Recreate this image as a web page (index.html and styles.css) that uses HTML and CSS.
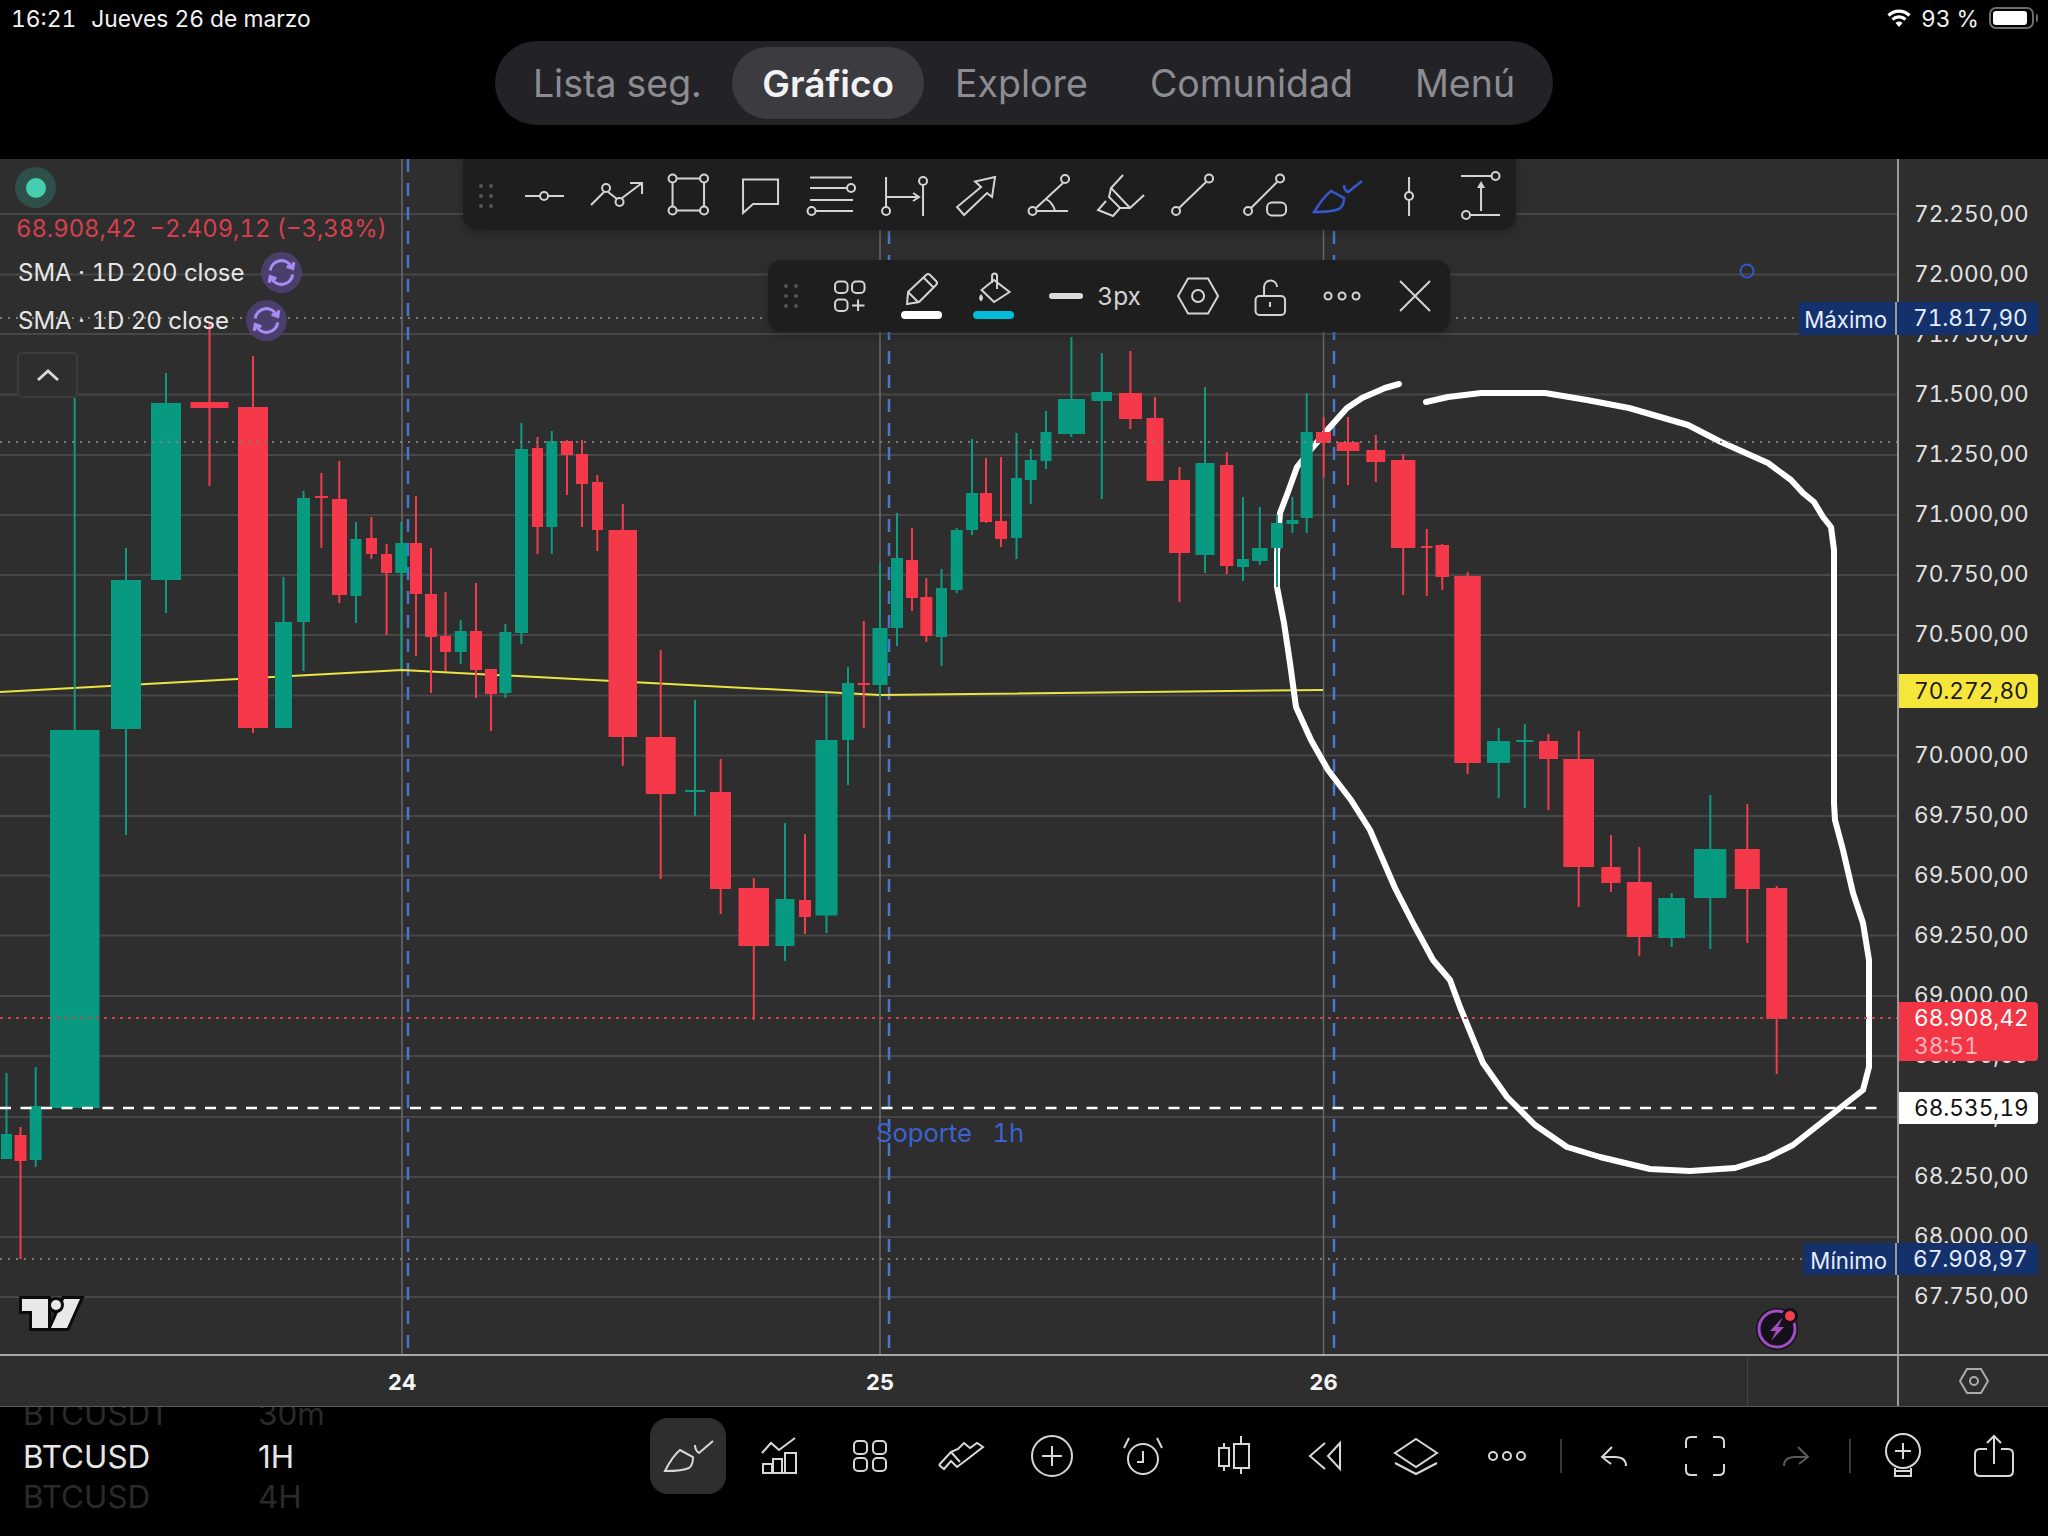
FILE: index.html
```html
<!DOCTYPE html>
<html lang="es">
<head>
<meta charset="utf-8">
<title>BTCUSD</title>
<link rel="stylesheet" href="styles.css">
</head>
<body>
<div class="page">
  <header class="status">
    <div class="status-left"><span>16:21</span><span>Jueves 26 de marzo</span></div>
    <div class="status-right">
      <svg class="wifi" viewBox="0 0 24 18"><path class="wifi-arc" d="M1.5 6.5A15 15 0 0 1 22.5 6.5M5.5 10.5A9.5 9.5 0 0 1 18.5 10.5"/><path class="wifi-dot" d="M12 18L8.5 14A5 5 0 0 1 15.5 14Z"/></svg>
      <span>93 %</span>
      <div class="battery"><div class="battery-fill"></div></div><div class="battery-nub"></div>
    </div>
  </header>

  <nav class="tabs-row">
    <div class="tabs">
      <div class="tab">Lista seg.</div>
      <div class="tab active">Gráfico</div>
      <div class="tab">Explore</div>
      <div class="tab">Comunidad</div>
      <div class="tab">Menú</div>
    </div>
  </nav>

  <section class="chart-main">
    <div class="plot">
      <svg class="canvas" viewBox="0 159 1897 1195" preserveAspectRatio="none">
        <path class="grid" d="M0 214H1897M0 274.500H1897M0 334H1897M0 394.500H1897M0 455H1897M0 515H1897M0 575H1897M0 635H1897M0 695.500H1897M0 755.500H1897M0 816H1897M0 875.500H1897M0 935.500H1897M0 996H1897M0 1056H1897M0 1117H1897M0 1177H1897M0 1237H1897M0 1297H1897"/>
        <path class="vgrid" d="M402 159V1354M880 159V1354M1323.500 159V1354"/>
        <path class="vdash" d="M408 159V1354M889 159V1354M1334 159V1354"/>
        <polyline class="sma" points="0,692 402,670 880,695 1323,690"/>
        <polyline class="draw" points="1426,402 1448,397 1481,393 1545,393 1587,400 1629,408 1688,425 1721,442 1768,463 1791,480 1803,493 1814,502 1823,517 1831,527 1834,550 1834,803 1835,820 1843,850 1853,893 1863,923 1869,960 1869,1067 1863,1090 1840,1108 1793,1145 1767,1158 1735,1168 1690,1171 1650,1169 1600,1157 1567,1147 1535,1125 1507,1097 1483,1063 1460,1007 1450,980 1433,960 1414,925 1395,888 1370,830 1351,800 1328,770 1311,740 1296,707 1290,663 1284,623 1277,587 1277,553 1280,513 1288,492 1297,467 1313,447 1330,427 1347,408 1362,398 1385,388 1399,384"/>
        <path class="wick up" d="M6.500 1073V1159M35.700 1067V1167M74.700 398V730M126 548V835M166 373V613M283.500 577V622M303.500 491V671M356 522V623M401.300 522V669M460.700 620V664M505.400 624V698M521.400 423V644M551.800 431V554M695 700V816M785 823V961M826.500 693V933M848 667V785M880 562V697M897 513V646M941.500 569V666M956.700 528V593M972 439V535M1016.500 433V559M1030.800 449V504M1046 411V469M1071.400 337V437M1101.800 353V499M1205 387V573M1243 497V581M1259.800 507V565M1277 515V587M1292.400 497V533M1306.700 393V533M1498.700 728V798M1524.800 724V808M1671.700 893V947M1710.300 795V949"/>
        <path class="body up" d="M1 1134h11V1159H1zM29.700 1106h12V1160h-12zM50 730h49.500V1108H50zM111 580h30V729h-30zM151 403h30V580h-30zM275 622h17V728h-17zM297 498h13V622h-13zM350.500 539h11V596h-11zM395.300 543h12V573h-12zM454.700 631h12V652h-12zM499.400 632h12V693h-12zM515 449h13V633h-13zM546.300 441h11V527h-11zM685 790h20v2h-20zM775.500 899h19V946h-19zM815.500 740h22V915.500h-22zM842 683h12V740h-12zM872.500 628h15V685h-15zM891 558h12V628h-12zM936 588h11V637h-11zM950.700 530h12V590h-12zM966 493h12V530h-12zM1011 478h11V538h-11zM1024.800 460h12V480h-12zM1040.500 432h11V461h-11zM1058 399h27V434h-27zM1091.500 392h20.500V401h-20.500zM1195.500 463h19V555h-19zM1237 559h12V567h-12zM1252 548h15.600V561h-15.600zM1271 523h12V548h-12zM1286.400 520h12V524h-12zM1300.700 432h12V518h-12zM1487 741h23V763h-23zM1516.300 740h17v2h-17zM1658.300 898h26.700V938h-26.700zM1694 849h32.300V898h-32.300z"/>
        <path class="wick down" d="M20.500 1127V1259M209.500 323V486M253 356V733M321.400 473V548M339.300 461V603M371.400 517V559M386.600 544V635M416 496V656M431 548V693M445.500 592V671M476 583V698M491 669V731M537.500 437V554M567 440V495M582 440V527M597.300 475V551M622.800 504V766M660.700 650V879M720.700 759V914M753.800 878V1020M805 834V934M863.800 621V728M912 528V611M926.300 578V642M986 458V523M1001 457V547M1130.400 351V429M1155 397V481M1179.500 467V602M1226.800 452V574M1323.700 417V477M1348 417V485M1375.800 435V482M1403.200 454V595M1426.800 529V596M1442.300 544V590M1467.600 572V774M1548.400 734V810M1578.700 731V907M1611 835V892M1639.300 847V956M1747.300 804V943M1776.700 886V1074"/>
        <path class="body down" d="M14.500 1135h12V1161h-12zM190.500 402h38V408h-38zM238 407h30V728h-30zM315 496h13v2h-13zM332 499h15V595h-15zM366 538h11V554h-11zM381 554h11V573h-11zM410 543h12V594h-12zM425 594h12V637h-12zM440 636h11V652h-11zM470 631h12V670h-12zM485 669h12V694h-12zM532 448h11V527h-11zM561 441h12V455h-12zM576 454h12V484h-12zM592 482h11V530h-11zM608.500 530h28.500V737h-28.500zM645.700 737h30V794h-30zM710 792h21V889h-21zM738.500 888h30.500V946h-30.500zM799 900h12V917h-12zM857.800 683h12v2h-12zM906 560h12V598h-12zM920.300 597h12V636h-12zM980 493h12V522h-12zM995 521h12V539h-12zM1119 393h23V419h-23zM1146.500 418h17V481h-17zM1169 480h21V553h-21zM1220 465h13.400V566h-13.400zM1316 432h15V443h-15zM1336.700 442h22.700V451h-22.700zM1366.300 450h19V462h-19zM1391 460h24.400V548h-24.400zM1421 546h11.400v2h-11.400zM1435.500 545h13.500V577h-13.500zM1454.300 576h26.500V763h-26.500zM1539 741h19V759h-19zM1563.300 759h30.700V867h-30.700zM1601.300 867h19.300V883h-19.300zM1626.800 882h25V937h-25zM1734.800 849h25V889h-25zM1766.200 888h21V1019h-21z"/>
        <path class="dots grey" d="M0 318H1799M0 442H1897M0 1259H1803"/>
        <path class="dots red" d="M0 1018H1897"/>
        <path class="dash-white" d="M0 1108H1885"/>
        <circle class="anchor" cx="1747" cy="271" r="6.500"/>
        <g class="tv-logo">
          <path d="M22 1299H48V1328H32V1311H22Z"/><path d="M64 1299H80L67 1328H51Z"/><circle cx="56" cy="1305" r="5"/>
        </g>
      </svg>

      <div class="legend">
        <div class="legend-status"><div class="status-ring"><div class="status-core"></div></div></div>
        <div class="legend-price">68.908,42&nbsp;&nbsp;−2.409,12 (−3,38%)</div>
        <div class="legend-row"><span>SMA · 1D 200 close</span>
          <div class="sync"><svg viewBox="-20 -20 40 40"><path d="M-11 -2A11 11 0 0 1 10 -5M11 2A11 11 0 0 1 -10 5M5 -6L11 -4L12 -10M-5 6L-11 4L-12 10"/></svg></div>
        </div>
        <div class="legend-row"><span>SMA · 1D 20 close</span>
          <div class="sync"><svg viewBox="-20 -20 40 40"><path d="M-11 -2A11 11 0 0 1 10 -5M11 2A11 11 0 0 1 -10 5M5 -6L11 -4L12 -10M-5 6L-11 4L-12 10"/></svg></div>
        </div>
        <div class="collapse"><svg viewBox="0 0 24 14"><path d="M2 12L12 3L22 12"/></svg></div>
      </div>

      <div class="soporte">Soporte&nbsp;&nbsp;&nbsp;1h</div>

      <div class="badge">
        <svg viewBox="-23 -23 46 46"><circle class="badge-bg" r="21"/><circle class="badge-ring" r="18"/><path class="badge-bolt" d="M6 -12L-7 2H-1L-6 12L7 -2H1Z"/><circle class="badge-dotbg" cx="13" cy="-13" r="8"/><circle class="badge-dot" cx="13" cy="-13" r="5"/></svg>
      </div>

      <div class="toolbar toolbar-tools">
        <div class="grip"><i></i><i></i><i></i><i></i><i></i><i></i></div>
        <svg class="ico" viewBox="-36 -28 72 56"><path d="M-19 0H-4M4 0H20"/><circle r="4"/></svg>
        <svg class="ico" viewBox="-36 -28 72 56"><path d="M-25 9L-12 -4M-8 -4L1 3M6 2L26 -13M14 -13H26V-2"/><circle cx="-10" cy="-8" r="4"/><circle cx="3.500" cy="6" r="4"/></svg>
        <svg class="ico" viewBox="-36 -28 72 56"><path d="M-11 -17.500H12M-11 14.500H12M-15.500 -13.500V10.500M16 -13.500V10.500"/><circle cx="-15.500" cy="-17.500" r="4"/><circle cx="16" cy="-17.500" r="4"/><circle cx="-15.500" cy="14.500" r="4"/><circle cx="16" cy="14.500" r="4"/></svg>
        <svg class="ico" viewBox="-36 -28 72 56"><path d="M-17 -16.500H18V8H-7L-17 17Z"/></svg>
        <svg class="ico" viewBox="-36 -28 72 56"><path d="M-22 -18.500H20M-22 -8H15M-22 4H21M-16 15H21"/><circle cx="19" cy="-8" r="4"/><circle cx="-20.500" cy="15" r="4"/></svg>
        <svg class="ico" viewBox="-36 -28 72 56"><path d="M-18 -19V11M19 -11V20M-18 1H14M9 -3L15 1L9 5"/><circle cx="-18" cy="15" r="4"/><circle cx="19" cy="-15" r="4"/></svg>
        <svg class="ico" viewBox="-36 -28 72 56"><path d="M18 -19L-2 -14.500L4 -9L-20 11L-13 19L10 -3L15 1Z"/></svg>
        <svg class="ico" viewBox="-36 -28 72 56"><path d="M-13 12L14 -13M-12 15H19M-3 3Q4 7 6 15"/><circle cx="-16.500" cy="15" r="4"/><circle cx="16" cy="-17" r="4"/></svg>
        <svg class="ico" viewBox="-36 -28 72 56"><path d="M2 -21L-10 -8L9 12M-10 -8L-12 1L-1 12H9L23 -1M-15 5L-23 14L-8 20L-1 12"/></svg>
        <svg class="ico" viewBox="-36 -28 72 56"><path d="M-14 12L13 -14"/><circle cx="-17" cy="15" r="4"/><circle cx="16" cy="-17.500" r="4"/></svg>
        <svg class="ico" viewBox="-36 -28 72 56"><path d="M-14 12L12 -14"/><circle cx="-17" cy="15" r="4"/><circle cx="15" cy="-17.500" r="4"/><rect x="2" y="6.500" width="19" height="13" rx="5"/></svg>
        <svg class="ico ico-blue" viewBox="-36 -28 72 56"><path d="M-23 16C-18 8 -13 0 -6 -5L7 2C7 8 5 11 2 13C-5 16 -15 16 -23 16ZM7 -11C7 -8 8 -5 11 -4L25 -15"/></svg>
        <svg class="ico" viewBox="-36 -28 72 56"><path d="M0 -19V-4M0 4V20"/><circle r="4"/></svg>
        <svg class="ico" viewBox="-36 -28 72 56"><path d="M-20 -20H10M-11 19H19M0 15V-12"/><path class="solid" d="M0 -15L-4 -8H4Z"/><circle cx="14.500" cy="-20" r="4"/><circle cx="-15" cy="19" r="4"/></svg>
      </div>

      <div class="toolbar toolbar-style">
        <div class="grip"><i></i><i></i><i></i><i></i><i></i><i></i></div>
        <svg class="ico" viewBox="-36 -28 72 56"><rect x="-14" y="-14.500" width="12.500" height="11.500" rx="4"/><rect x="3" y="-14.500" width="12.500" height="11.500" rx="4"/><rect x="-14" y="3.500" width="12.500" height="11.500" rx="4"/><path d="M9 3.500V15M3 9.500H15.500"/></svg>
        <svg class="ico" viewBox="-36 -28 72 56"><path d="M-14 8L-13 -4L5 -21Q7 -23 9 -21L15 -15Q17 -13 15 -11L-2 6ZM-13 -4L-3 6M2 -19L12 -9"/><rect class="swatch white" x="-20" y="15" width="41" height="8" rx="4"/></svg>
        <svg class="ico" viewBox="-36 -28 72 56"><path d="M1 -16L16.500 -4L1 6L-11.500 -6ZM-1 -13V-20A2.500 2.500 0 0 1 4 -20V-7"/><path class="solid" d="M-12 -2Q-8 2 -12 5.500Q-16 2 -12 -2Z"/><rect class="swatch cyan" x="-20" y="15" width="41" height="8" rx="4"/></svg>
        <div class="thickness"><div class="thickness-bar"></div><span>3px</span></div>
        <svg class="ico" viewBox="-36 -28 72 56"><path d="M-20 0L-10 -17.500H10L20 0L10 17.500H-10Z"/><circle r="6"/></svg>
        <svg class="ico" viewBox="-36 -28 72 56"><rect x="-14.500" y="0" width="29.500" height="19" rx="4"/><path d="M-6 0V-9A6.500 6.500 0 0 1 7 -9M0 6V11"/></svg>
        <svg class="ico" viewBox="-36 -28 72 56"><circle cx="-14" r="3.500"/><circle r="3.500"/><circle cx="14" r="3.500"/></svg>
        <svg class="ico" viewBox="-36 -28 72 56"><path d="M-15 -15L15 15M15 -15L-15 15"/></svg>
      </div>
    </div>

    <div class="axis">
      <div>72.250,00</div><div>72.000,00</div><div>71.750,00</div><div>71.500,00</div><div>71.250,00</div><div>71.000,00</div><div>70.750,00</div><div>70.500,00</div><div>70.250,00</div><div>70.000,00</div><div>69.750,00</div><div>69.500,00</div><div>69.250,00</div><div>69.000,00</div><div>68.750,00</div><div>68.500,00</div><div>68.250,00</div><div>68.000,00</div><div>67.750,00</div>
    </div>

    <div class="tag tag-max"><span class="tag-name">Máximo</span><span class="tag-value">71.817,90</span></div>
    <div class="tag tag-min"><span class="tag-name">Mínimo</span><span class="tag-value">67.908,97</span></div>
    <div class="tag tag-sma"><span class="tag-value">70.272,80</span></div>
    <div class="tag tag-last"><span class="tag-value">68.908,42</span><span class="tag-count">38:51</span></div>
    <div class="tag tag-line"><span class="tag-value">68.535,19</span></div>
  </section>

  <section class="time-row">
    <div class="time-scale"><span class="d24">24</span><span class="d25">25</span><span class="d26">26</span><i class="now-line"></i></div>
    <div class="time-corner"><svg viewBox="-16 -14 32 28"><path d="M-14 0L-7 -12H7L14 0L7 12H-7Z"/><circle r="4"/></svg></div>
  </section>

  <footer class="bottom">
    <div class="picker">
      <div class="pick faded"><span>BTCUSDT</span><span>30m</span></div>
      <div class="pick"><span>BTCUSD</span><span>1H</span></div>
      <div class="pick faded"><span>BTCUSD</span><span>4H</span></div>
    </div>
    <div class="tool active"><svg viewBox="-36 -30 72 60"><path d="M-23 15C-19 7 -14 -1 -8 -6L5 1C5 7 4 10 1 12C-5 15 -15 15 -23 15ZM7 -11C7 -8 8 -5 11 -3L25 -15"/></svg></div>
    <div class="tool"><svg viewBox="-36 -30 72 60"><path d="M-17 -3L-8 -13L0 -6L16 -18M-17 17H18M-16 17V8H-7V17M-6 17V3H3V17M6 17V-3H17V17"/></svg></div>
    <div class="tool"><svg viewBox="-36 -30 72 60"><rect x="-16" y="-15" width="13" height="13" rx="4"/><rect x="3" y="-15" width="13" height="13" rx="4"/><rect x="-16" y="2" width="13" height="13" rx="4"/><rect x="3" y="2" width="13" height="13" rx="4"/></svg></div>
    <div class="tool"><svg viewBox="-36 -30 72 60"><path d="M-22 9L-10 -4L-1 6M-22 9L-17 13L-10 5L-4 11L4 5L22 -9L16 -13L9 -8L3 -13L-3 -7L-10 -4"/></svg></div>
    <div class="tool"><svg viewBox="-36 -30 72 60"><circle r="20"/><path d="M-10 0H10M0 -10V10"/></svg></div>
    <div class="tool"><svg viewBox="-36 -30 72 60"><circle cy="3" r="15"/><path d="M0 -5V6H-6M-19 -8L-14 -18M19 -8L14 -18"/></svg></div>
    <div class="tool"><svg viewBox="-36 -30 72 60"><rect x="-15" y="-8" width="10" height="18"/><rect x="0" y="-12" width="15" height="24"/><path d="M-10 -13V-8M-10 10V15M7 -20V-12M7 12V18"/></svg></div>
    <div class="tool"><svg viewBox="-36 -30 72 60"><path d="M0 -13L-15 0L0 13M15 -13L3 0L15 13Z"/></svg></div>
    <div class="tool"><svg viewBox="-36 -30 72 60"><path d="M0 -17L21 -3L0 11L-21 -3ZM-21 7L0 18L21 7"/></svg></div>
    <div class="tool"><svg viewBox="-36 -30 72 60"><circle cx="-14" r="4"/><circle r="4"/><circle cx="14" r="4"/></svg></div>
    <div class="tool-sep"></div>
    <div class="tool"><svg viewBox="-36 -30 72 60"><path d="M-2 -9L-12 1L-3 8M-12 1H1Q12 1 12 10"/></svg></div>
    <div class="tool"><svg viewBox="-36 -30 72 60"><path d="M-19 -8V-14Q-19 -19 -14 -19H-8M8 -19H14Q19 -19 19 -14V-8M19 8V14Q19 19 14 19H8M-8 19H-14Q-19 19 -19 14V8"/></svg></div>
    <div class="tool muted"><svg viewBox="-36 -30 72 60"><path d="M2 -9L12 1L3 8M12 1H-1Q-12 1 -12 10"/></svg></div>
    <div class="tool-sep"></div>
    <div class="tool"><svg viewBox="-36 -30 72 60"><circle cy="-5" r="17"/><path d="M-8 -5H8M0 -13V3M-8 12V20H8V12M-8 15H8"/></svg></div>
    <div class="tool"><svg viewBox="-36 -30 72 60"><path d="M-7 -7H-14Q-19 -7 -19 -2V15Q-19 20 -14 20H14Q19 20 19 15V-2Q19 -7 14 -7H7M0 8V-20M-7 -13L0 -20L7 -13"/></svg></div>
  </footer>
</div>
</body>
</html>
```
FILE: styles.css
```css
* { box-sizing: border-box; }
html, body { margin: 0; background: #000; }
body { font-family: Inter, "Noto Sans", sans-serif; color: #e6e6e6; font-variant-numeric: tabular-nums; }
.page { width: 2048px; height: 1536px; overflow: hidden; display: flex; flex-direction: column; background: #000; }

/* status bar */
.status { height: 40px; flex: none; display: flex; justify-content: space-between; align-items: center; padding: 0 10px 4px 11px; font-size: 22.8px; color: #f2f2f2; }
.status-left { display: flex; gap: 15px; }
.status-right { display: flex; align-items: center; }
.wifi { width: 24px; height: 18px; margin-right: 10px; }
.wifi-arc { fill: none; stroke: #fff; stroke-width: 3.2; }
.wifi-dot { fill: #fff; }
.battery { width: 45px; height: 22px; margin-left: 10px; border: 2px solid #6c6c6c; border-radius: 7px; padding: 2px; }
.battery-fill { width: 34px; height: 100%; background: #fff; border-radius: 3px; }
.battery-nub { width: 2px; height: 8px; margin-left: 2px; background: #6c6c6c; border-radius: 0 2px 2px 0; }

/* tabs */
.tabs-row { height: 119px; flex: none; display: flex; justify-content: center; align-items: flex-start; padding-top: 1px; }
.tabs { display: flex; height: 84px; padding: 6px 7px; background: #232327; border-radius: 42px; }
.tab { height: 72px; padding: 0 31px; display: flex; align-items: center; font-size: 37.5px; color: #8c8c92; border-radius: 36px; }
.tab.active { padding: 0 30px; background: #3b3b40; color: #f2f2f2; font-weight: 600; font-size: 37px; }

/* chart */
.chart-main { position: relative; flex: none; height: 1195px; display: flex; background: #2e2e2e; }
.plot { position: relative; width: 1897px; flex: none; overflow: hidden; }
.canvas { position: absolute; inset: 0; width: 1897px; height: 1195px; display: block; }
.grid { stroke: #474747; stroke-width: 2; fill: none; }
.vgrid { stroke: #6a6a6a; stroke-width: 1.5; fill: none; }
.vdash { stroke: #4a77c9; stroke-width: 2.5; stroke-dasharray: 13 11; fill: none; }
.sma { fill: none; stroke: #ece344; stroke-width: 2; }
.draw { fill: none; stroke: #fff; stroke-width: 6; stroke-linejoin: round; stroke-linecap: round; }
.wick { fill: none; stroke-width: 2; }
.wick.up { stroke: #0b9c82; }
.wick.down { stroke: #f23c4c; }
.body.up { fill: #089a80; }
.body.down { fill: #f5384a; }
.dots { fill: none; stroke-width: 2; }
.dots.grey { stroke: #7d7d7d; stroke-dasharray: 2 6; }
.dots.red { stroke: #c9424c; stroke-dasharray: 3 5; }
.dash-white { fill: none; stroke: #fff; stroke-width: 2.500; stroke-dasharray: 11 9.5; }
.anchor { fill: none; stroke: #3558c8; stroke-width: 2; }
.tv-logo path, .tv-logo circle { fill: #e8e8e8; stroke: #0b0b0b; stroke-width: 6; paint-order: stroke; }

/* legend */
.legend { position: absolute; left: 15px; top: 8px; display: flex; flex-direction: column; align-items: flex-start; }
.legend-status { height: 41px; }
.status-ring { width: 41px; height: 41px; border-radius: 50%; background: #2f4f4b; display: flex; align-items: center; justify-content: center; }
.status-core { width: 20px; height: 20px; border-radius: 50%; background: #46ceb1; }
.legend-price { height: 40px; display: flex; align-items: center; padding-left: 1px; font-size: 23.8px; color: #d6404d; white-space: nowrap; }
.legend-row { height: 48px; display: flex; align-items: center; gap: 17px; padding-left: 3px; font-size: 24px; color: #e6e6e6; white-space: nowrap; }
.sync { width: 41px; height: 41px; border-radius: 50%; background: #4a3f6c; flex: none; }
.sync svg { display: block; width: 41px; height: 41px; fill: none; stroke: #a88cf2; stroke-width: 3; }
.collapse { margin: 8px 0 0 2px; width: 61px; height: 46px; background: #2e2e2e; border: 2px solid #3c3c3c; border-radius: 5px; display: flex; align-items: center; justify-content: center; }
.collapse svg { width: 24px; height: 14px; fill: none; stroke: #d8d8d8; stroke-width: 3; }

.soporte { position: absolute; left: 876px; top: 959px; font-size: 25.6px; line-height: 30px; color: #3d62d0; white-space: nowrap; }
.badge { position: absolute; left: 1754px; top: 1147px; width: 46px; height: 46px; }
.badge svg { display: block; width: 46px; height: 46px; }
.badge-bg { fill: #15101a; }
.badge-ring { fill: none; stroke: #a04ec2; stroke-width: 3; }
.badge-bolt { fill: #a04ec2; }
.badge-dotbg { fill: #15101a; }
.badge-dot { fill: #f2404a; }

/* floating toolbars */
.toolbar { position: absolute; display: flex; align-items: center; background: #1e1e1e; border-radius: 14px; box-shadow: 0 3px 10px rgba(0,0,0,.25); color: #d4d4d4; }
.toolbar-tools { left: 463px; top: 0; width: 1053px; height: 71px; padding-top: 3px; border-radius: 0 0 14px 14px; }
.toolbar-style { left: 768px; top: 101px; width: 682px; height: 72px; }
.grip { flex: none; width: 45px; display: grid; grid-template-columns: 4px 4px; grid-auto-rows: 4px; gap: 6px; justify-content: center; align-content: center; }
.grip i { width: 4px; height: 4px; border-radius: 50%; background: #555; }
.ico { flex: none; width: 72.1px; height: 56px; fill: none; stroke: currentColor; stroke-width: 2; }
.ico-blue { color: #3558d0; stroke-width: 2.500; }
.ico .solid { fill: currentColor; stroke: none; }
.swatch { stroke: none; }
.swatch.white { fill: #fff; }
.swatch.cyan { fill: #00bcd9; }
.thickness { flex: none; width: 133px; display: flex; align-items: center; padding-left: 20px; gap: 14px; font-size: 24.5px; }
.thickness-bar { width: 34px; height: 6px; border-radius: 3px; background: #dcdcdc; }

/* price axis */
.axis { flex: 1; min-width: 0; border-left: 2px solid #9a9a9a; padding: 24px 0 0 15px; display: grid; grid-auto-rows: 60.13px; align-items: center; font-size: 22.6px; color: #e2e2e2; }
.tag { position: absolute; display: flex; align-items: center; font-size: 22.6px; white-space: nowrap; }
.tag-value { padding-left: 16px; position: relative; top: -1px; }
.tag-name { flex: 1; font-size: 22.2px; padding: 2px 8px 0 0; border-right: 2px solid #9a9a9a; height: 100%; display: flex; align-items: center; justify-content: flex-end; }
.tag-max, .tag-min { right: 10px; background: #14316c; color: #e6eeff; }
.tag-max .tag-value, .tag-min .tag-value { width: 141px; }
.tag-max { left: 1799px; top: 143px; height: 33px; }
.tag-min { left: 1803px; top: 1084px; height: 32px; }
.tag-sma { left: 1899px; right: 10px; top: 515px; height: 34px; background: #f6e63c; color: #1a1a1a; border-radius: 0 4px 4px 0; }
.tag-sma .tag-value, .tag-line .tag-value { padding-left: 15px; }
.tag-last { left: 1899px; right: 10px; top: 843px; height: 59px; flex-direction: column; align-items: flex-start; justify-content: center; background: #f23645; color: #fff; border-radius: 0 4px 4px 0; }
.tag-last .tag-value, .tag-count { padding-left: 15px; }
.tag-count { color: #ffb3ba; }
.tag-line { left: 1899px; right: 10px; top: 933px; height: 32px; background: #fff; color: #111; border-radius: 0 4px 4px 0; }

/* time axis */
.time-row { flex: none; height: 53px; display: flex; background: #2e2e2e; border-top: 2px solid #a8a8a8; border-bottom: 1px solid #5a5a5a; }
.time-scale { position: relative; width: 1897px; display: grid; grid-template-columns: 372px 60px 418px 60px 383.5px 60px 1fr; align-items: center; font-size: 22px; font-weight: 700; color: #f5f5f5; padding-top: 1px; }
.time-scale span { text-align: center; }
.d24 { grid-column: 2; }
.d25 { grid-column: 4; }
.d26 { grid-column: 6; }
.now-line { position: absolute; left: 1747px; top: 0; bottom: 0; width: 1px; background: #3b4454; }
.time-corner { flex: 1; border-left: 2px solid #9a9a9a; display: flex; align-items: center; justify-content: center; }
.time-corner svg { width: 32px; height: 28px; fill: none; stroke: #ababab; stroke-width: 2; }

/* bottom toolbar */
.bottom { flex: 1; display: flex; align-items: flex-start; overflow: hidden; color: #d8d8d8; }
.picker { width: 642.5px; flex: none; padding: 0 0 0 23px; margin-top: -11px; }
.pick { height: 40.5px; display: grid; grid-template-columns: 235px auto; align-items: center; font-size: 31.4px; color: #e6e6e6; font-variant-numeric: normal; }
.pick:first-child { margin-top: -2px; margin-bottom: 2px; }
.pick.faded { color: #2a2a2a; }
.tool { width: 91px; height: 76px; margin-top: 11px; flex: none; display: flex; align-items: center; justify-content: center; }
.tool svg { width: 72px; height: 60px; fill: none; stroke: currentColor; stroke-width: 2; }
.tool.active { width: 76px; margin-left: 7.5px; margin-right: 7.5px; background: #2e2e2e; border-radius: 18px; }
.tool.muted { color: #5a5a5a; }
.tool-sep { width: 16px; flex: none; height: 34px; margin-top: 32px; background: linear-gradient(#3a3a3a, #3a3a3a) center / 2px 100% no-repeat; }
```
